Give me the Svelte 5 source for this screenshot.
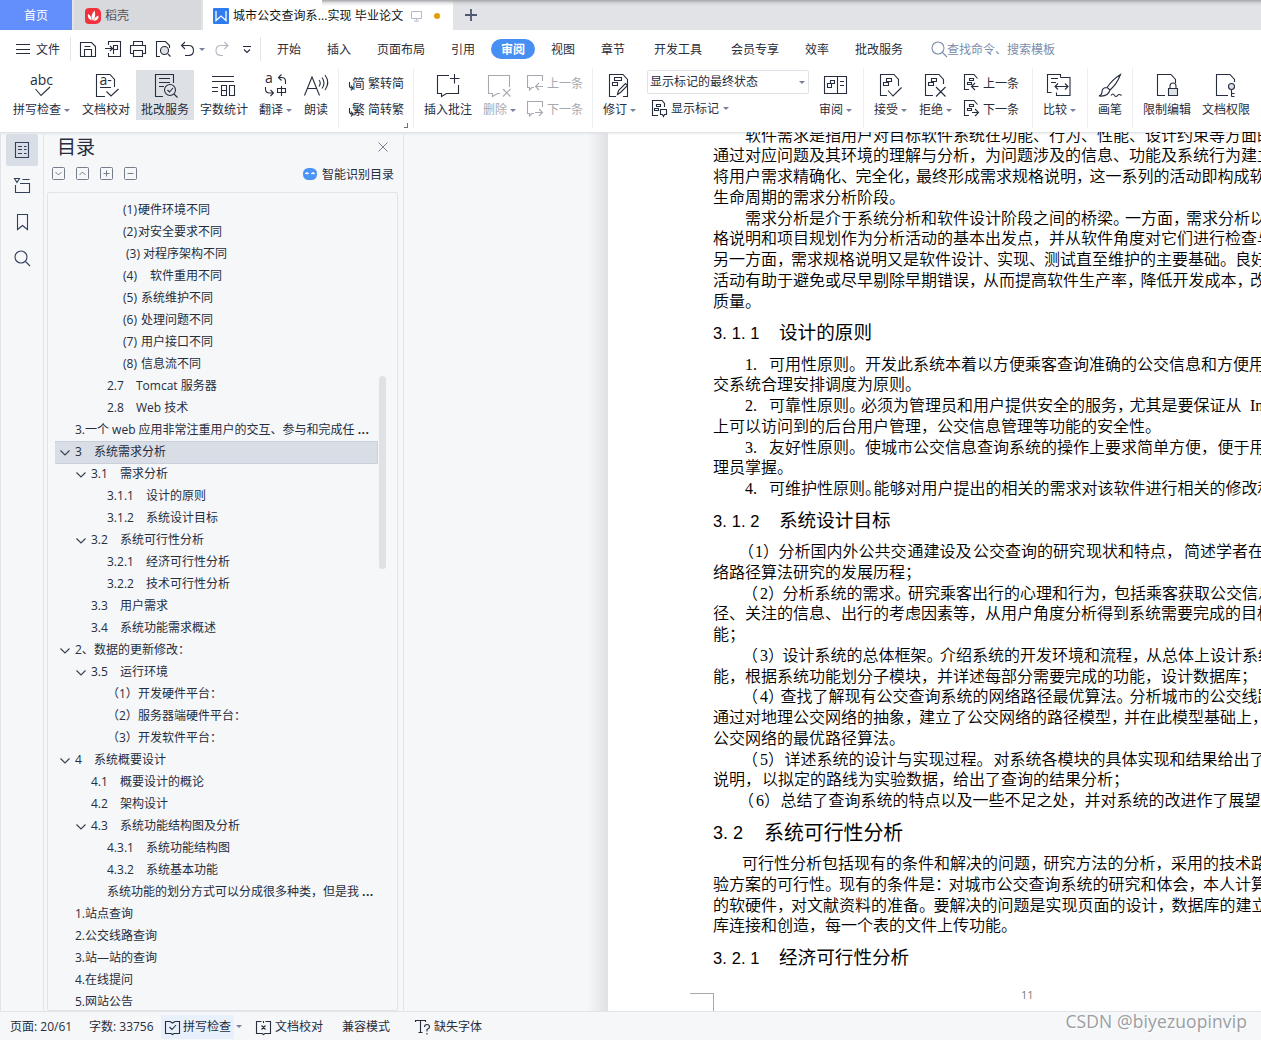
<script>
  const icons = {
    spell: { d: 'M6.5 15l5.5 6.5 9-8.5', t: [1, 11, 14, 'abc'] },
    proof: { d: 'M10 22.5H1.5V.5H15l4.5 5V13M11.5 17.5l4.5 4.5 7.5-7M5 13.5h11', t: [4.5, 11, 14, 'a-'] },
    review: { d: 'M9 22.5H1.5V.5h18V9M5 4.5h11M5 8.5h11M5 12.5h5M20 20l3.5 3.5M13.5 16l2 2 3.5-4', c: [16, 16, 5.5] },
    count: { d: 'M1 2.5h22M1 7.5h22M1 13.5h6M1 17.5h6M10.5 11.5h5v10h-5zM10.5 16.5h5M18.5 11.5h5v10h-5z' },
    translate: { d: 'M22.5 10V7q0-3.5-4-3.5h-3M18.5 .5l-3 3 3 3M2.5 13v2q0 4 4 4h4M7.5 16l3 3-3 3M14.5 14.5h8v4h-8zM18.5 12v10', t: [2, 9, 14, 'a'] },
    read: { d: 'M.5 21.5L8 3l7.5 18.5M3.5 14.5h9.5M15 6q2.5 3 0 6.5M18 3.500q4 5.500 0 11M21 1q5.500 7.500 0 15' },
    insert: { d: 'M13 1.500H1.500v18h4v3l5-3h12V11M18.500 0v9.500M14 4.500h9.500' },
    remove: { d: 'M13 19.500h-2.500l-5 3v-3h-4v-18h21V13M16 15l7.500 7.500M23.500 15L16 22.500' },
    revise: { d: 'M8 22.500H1.500V.5H15l4.500 5V22.500H15M9.500 20.500l1-4 7-7 2 2-7 7zM6.500 3.500h7v3h-7zM4.500 8.500h5v3h-5z' },
    pane: { d: 'M1.500 2.500h22v17h-22zM14.500 2.500v17M7.500 6.500h4v3h-4zM4.500 9.500h4v4h-4zM17 7.500h4M17 11.500h4' },
    accept: { d: 'M8 21.500H1.500V.5H15l4.500 5V12M9 16.500l5 5.500 8.500-8.500M7.500 4.500h5v3h-5zM4.500 8.500h5v3h-5z' },
    reject: { d: 'M9 21.500H1.500V.5H15l4.500 5V10M12 13l9.500 9.500M21.500 13L12 22.500M7.500 4.500h5v3h-5zM4.500 8.500h5v3h-5z' },
    compare: { d: 'M14.500 3.500V.5h-13v18h4M14.500 3.500h9.500v18H10.500v-3M5 4.500h7M5 8.500h5M9.500 12.500h12M12 9.500l-3 3 3 3M19 9.500l3 3-3 3' },
    brush: { d: 'M22.500.5q-8 5-13.500 13l3 2.500Q19 10 22.500.5zM9 13.500q-5 0-5 4.500 0 3-3 4 9 1 11-6M13 21.500q2-3 3.500 0 1.500 2 3 0t4 0' },
    lock: { d: 'M9 21.500H1.500V.5H15l4.500 5V9M14 14v-2q0-3 3-3t3 3v2', f: 'M12.500 14.500h9v7h-9z' },
    key: { d: 'M13 21.500H1.500V.5H15l4.500 5V8M16.500 16v6.500M16.500 19.500h3M16.500 22.500h3', c: [16.500, 12.500, 3] },
    toSimple: { d: 'M1.500 8v4q0 2 3 2M3 11.500l2 2.500-2 2.500', t: [4, 14, 13, '简'] },
    toTrad: { d: 'M1.500 8v4q0 2 3 2M3 11.500l2 2.500-2 2.500', t: [4, 14, 13, '繁'] },
    prevC: { d: 'M7 13.500H5L2.500 16v-2.500h-2v-12h15V7M16 12.500H9M12 9l-3.500 3.500L12 16' },
    nextC: { d: 'M7 13.500H5L2.500 16v-2.500h-2v-12h15V7M8 12.500h7.500M12 9l3.500 3.500L12 16' },
    prev: { d: 'M5 15.500H.5V.5H10l3.500 4M14.500 12.500H8M11 9l-3.500 3.500L11 16M5.500 4.500h4v2h-4zM3.500 8.500h4v2h-4z' },
    next: { d: 'M5 15.500H.5V.5H10l3.500 4M8 12.500h6.500M11 9l3.500 3.500L11 16M5.500 4.500h4v2h-4zM3.500 8.500h4v2h-4z' },
    marks: { d: 'M7 15.500H1.500V.5H11l2.500 3V7M5.500 4.500h4v2h-4zM3.500 8.500h4v2h-4zM9.500 9.500h6v5h-2l-1 2-1-2h-2z' },
    save: { d: 'M.5 1.500h11l4 4v10H.5zM4.500 15V8.500h7V15M4.500 5.500h6' },
    pdf: { d: 'M3.500 4V.5h12v15h-12V12M0 7.500h7M5 5l2.500 2.500L5 10M8.500 13V4.500h4v4h-4' },
    print: { d: 'M3.500 5V.5h9V5M3.500 12.500h-3v-8h15v8h-3M3.500 9.500h9v6h-9z' },
    preview: { d: 'M5 15.500H1.500V.5h9l4 4V7M13 13l2.500 2.500', c: [9.500, 9.500, 4] },
    undo: { d: 'M5 1L1.500 4.500 5 8M1.500 4.500h7q5 0 5 5t-5 5H5' },
    redo: { d: 'M10.500 1L14 4.500 10.500 8M14 4.500H7q-5 0-5 5t5 5h2' },
    more: { d: 'M1 5.500h8M2 8.500l3 3 3-3' },
    menu: { d: 'M0 3.500h14M0 8.500h14M0 12.500h14' },
    outline: { d: 'M1.500.5h13v15h-13zM4 4.500h4M4 7.500h4M4 11.500h4M10 4.500h2.500M10 7.500h2.500M10 11.500h2.500' },
    folder: { d: 'M1.500 7v7.500h14v-9H6M8.500 1.500h7M.5.5h5l-2.500 4z' },
    bookmark: { d: 'M3.500.5h10v15l-5-4-5 4z' },
    search: { d: 'M11.500 11.500l4.500 4.500', c: [7, 7, 6], plain: true },
    close: { d: 'M.5.5l9 9M9.500.5l-9 9' },
    bookOk: { d: 'M6 14.500H.5v-12H5l2.500 1.500L10 2.500h4.500v12H9l-1.500 1-1.500-1M4.500 8l2.500 2.500 4-4.500' },
    bookX: { d: 'M6 14.500H.5v-12h5M9.500 2.500h5v12H9l-1.500 1-1.500-1M7.500 2v2M5.500 6.500l4 4M9.500 6.500l-4 4' },
    font: { d: 'M.5 3V1.500h10V3M5.500 1.500v12M3.500 13.500h4M9.500 8q0-2.500 2.500-2.500T14.500 8q0 1.500-2.500 2.500v2M12 14v1.500' }
  };

  const ribbon = [
    { x: 13, icon: 'spell', dx: 16, label: '拼写检查', arrow: true },
    { x: 82, icon: 'proof', dx: 13, label: '文档校对' },
    { x: 136, icon: 'review', dx: 18, label: '批改服务', active: true },
    { x: 200, icon: 'count', dx: 11, label: '字数统计' },
    { x: 259, icon: 'translate', dx: 4, label: '翻译', arrow: true },
    { x: 304, icon: 'read', dx: 0, label: '朗读' },
    { x: 338, sep: true },
    { x: 348, rows: [['toSimple', '繁转简'], ['toTrad', '简转繁']], g: 2 },
    { x: 413, sep: true, corner: true },
    { x: 424, icon: 'insert', dx: 12, label: '插入批注' },
    { x: 483, icon: 'remove', dx: 4, label: '删除', arrow: true, off: true },
    { x: 527, rows: [['prevC', '上一条'], ['nextC', '下一条']], g: 2, off: true },
    { x: 592, sep: true },
    { x: 603, icon: 'revise', dx: 5, label: '修订', arrow: true },
    { x: 647, select: true },
    { x: 819, icon: 'pane', dx: 4, label: '审阅', arrow: true },
    { x: 863, sep: true },
    { x: 874, icon: 'accept', dx: 5, label: '接受', arrow: true },
    { x: 919, icon: 'reject', dx: 5, label: '拒绝', arrow: true },
    { x: 964, rows: [['prev', '上一条'], ['next', '下一条']], g: 1 },
    { x: 1032, sep: true },
    { x: 1043, icon: 'compare', dx: 3, label: '比较', arrow: true },
    { x: 1087, sep: true },
    { x: 1098, icon: 'brush', dx: 0, label: '画笔' },
    { x: 1132, sep: true },
    { x: 1143, icon: 'lock', dx: 13, label: '限制编辑' },
    { x: 1202, icon: 'key', dx: 13, label: '文档权限' }
  ];
  const widthOf = (list, i, end) => (i + 1 < list.length ? list[i + 1].x : end) - list[i].x;

  const menu = [
    { x: 277, t: '开始' }, { x: 327, t: '插入' }, { x: 377, t: '页面布局' }, { x: 451, t: '引用' },
    { x: 491, t: '审阅', on: true }, { x: 551, t: '视图' }, { x: 601, t: '章节' }, { x: 654, t: '开发工具' },
    { x: 731, t: '会员专享' }, { x: 805, t: '效率' }, { x: 855, t: '批改服务' }
  ];

  // [text x, number, number width, title, expanded, selected]
  const tree = [
    [123, '(1)', 15, '硬件环境不同'], [123, '(2)', 15, '对安全要求不同'], [126, '(3)', 17, '对程序架构不同'],
    [123, '(4)', 27, '软件重用不同'], [123, '(5)', 18, '系统维护不同'], [123, '(6)', 18, '处理问题不同'],
    [123, '(7)', 18, '用户接口不同'], [123, '(8)', 18, '信息流不同'],
    [107, '2.7', 29, 'Tomcat 服务器'], [107, '2.8', 29, 'Web 技术'],
    [75, '3.', 10, '一个 web 应用非常注重用户的交互、参与和完成任', false, false, true],
    [75, '3', 19, '系统需求分析', true, true], [91, '3.1', 29, '需求分析', true],
    [107, '3.1.1', 39, '设计的原则'], [107, '3.1.2', 39, '系统设计目标'],
    [91, '3.2', 29, '系统可行性分析', true], [107, '3.2.1', 39, '经济可行性分析'], [107, '3.2.2', 39, '技术可行性分析'],
    [91, '3.3', 29, '用户需求'], [91, '3.4', 29, '系统功能需求概述'],
    [75, '2、', 19, '数据的更新修改：', true], [91, '3.5', 29, '运行环境', true],
    [107, '（1）', 31, '开发硬件平台：'], [107, '（2）', 31, '服务器端硬件平台：'], [107, '（3）', 31, '开发软件平台：'],
    [75, '4', 19, '系统概要设计', true], [91, '4.1', 29, '概要设计的概论'], [91, '4.2', 29, '架构设计'],
    [91, '4.3', 29, '系统功能结构图及分析', true], [107, '4.3.1', 39, '系统功能结构图'], [107, '4.3.2', 39, '系统基本功能'],
    [107, '', 0, '系统功能的划分方式可以分成很多种类，但是我', false, false, true],
    [75, '1.', 10, '站点查询'], [75, '2.', 10, '公交线路查询'], [75, '3.', 10, '站—站的查询'],
    [75, '4.', 10, '在线提问'], [75, '5.', 10, '网站公告']
  ];

  // Body lines are lists of [start x, text]; headings carry a number and a title.
  const lines = [
    [[745, '软件需求是指用户对目标软件系统在功能、行为、性能、设计约束等方面的']],
    [[713, '通过对应问题及其环境的理解与分析，为问题涉及的信息、功能及系统行为建立']],
    [[713, '将用户需求精确化、'], [855.5, '完全化，'], [916, '最终形成需求规格说明，'], [1089.5, '这一系列的活动即构成软件']],
    [[713, '生命周期的需求分析阶段。']],
    [[745, '需求分析是介于系统分析和软件设计阶段之间的桥梁。'], [1125, '一方面，'], [1186, '需求分析以规']],
    [[713, '格说明和项目规划作为分析活动的基本出发点，并从软件角度对它们进行检查与']],
    [[713, '另一方面，'], [791, '需求规格说明又是软件设计、'], [997, '实现、'], [1044, '测试直至维护的主要基础。'], [1235, '良好的']],
    [[713, '活动有助于避免或尽早剔除早期错误，'], [983, '从而提高软件生产率，'], [1140.5, '降低开发成本，'], [1250, '改善']],
    [[713, '质量。']],
    { n: '3.1.1', w: 66, t: '设计的原则' },
    [[745, '1.'], [769, '可用性原则。'], [865, '开发此系统本着以方便乘客查询准确的公交信息和方便用户']],
    [[713, '交系统合理安排调度为原则。']],
    [[745, '2.'], [769, '可靠性原则。'], [861, '必须为管理员和用户提供安全的服务，'], [1129.5, '尤其是要保证从'], [1250, 'Internet']],
    [[713, '上可以访问到的后台用户管理，公交信息管理等功能的安全性。']],
    [[745, '3.'], [769, '友好性原则。'], [865, '使城市公交信息查询系统的操作上要求简单方便，'], [1217.5, '便于用户']],
    [[713, '理员掌握。']],
    [[745, '4.'], [769, '可维护性原则。'], [873.5, '能够对用户提出的相关的需求对该软件进行相关的修改和']],
    { n: '3.1.2', w: 66, t: '系统设计目标' },
    [[738, '（'], [755, '1'], [763, '）'], [778.5, '分析国内外公共交'], [907.5, '通建设及'], [973, '公交查询的研究'], [1086, '现状和特点，'], [1184, '简述学者在网']],
    [[713, '络路径算法研究的发展历程；']],
    [[742, '（'], [760, '2'], [768, '）'], [782.5, '分析系统的需求。'], [908, '研究乘客出行的心理和行为，'], [1114, '包括乘客获取公交信息的途']],
    [[713, '径、关注的信息、出行的考虑因素等，从用户角度分析得到系统需要完成的目标']],
    [[713, '能；']],
    [[742, '（'], [760, '3'], [768, '）'], [782.5, '设计系统的总体框架。'], [940, '介绍系统的开发环境和流程，'], [1146, '从总体上设计系统功']],
    [[713, '能，根据系统功能划分子模块，并详述每部分需要完成的功能，设计数据库；']],
    [[742, '（'], [760, '4'], [768, '）'], [780.5, '查找了解现有公交查询系统的网络路径最优算法。'], [1129.5, '分析城市的公交线路网']],
    [[713, '通过对地理公交网络的抽象，'], [919, '建立了公交网络的路径模型，'], [1124, '并在此模型基础上，']],
    [[713, '公交网络的最优路径算法。']],
    [[742, '（'], [760, '5'], [768, '）'], [784.5, '详述系统的设计与实现过程。'], [993.5, '对系统各模块的具体实现和结果给出了详']],
    [[713, '说明，'], [762, '以拟定的路线为实验数据，'], [953, '给出了查询的结果分析；']],
    [[738, '（'], [756, '6'], [764, '）'], [780.5, '总结了查询系统的特点以及一些不足之处，'], [1084.5, '并对系统的改进作了展望。']],
    { n: '3.2', w: 51, t: '系统可行性分析', big: true },
    [[742, '可行性分析包括现有的条件和解决的问题，'], [1043.5, '研究方法的分析，'], [1171, '采用的技术路线']],
    [[713, '验方案的可行性。'], [839, '现有的条件是：'], [948.5, '对城市公交查询系统的研究和体会，'], [1203, '本人计算机']],
    [[713, '的软硬件，'], [791, '对文献资料的准备。'], [933.5, '要解决的问题是实现页面的设计，'], [1171.5, '数据库的建立']],
    [[713, '库连接和创造，每一个表的文件上传功能。']],
    { n: '3.2.1', w: 66, t: '经济可行性分析' }
  ];
  const segWidth = (l, i) => (i + 1 < l.length ? l[i + 1][0] - l[i][0] : 600);
</script>

{#snippet ico(name, size)}
  {@const i = icons[name]}
  <svg class="ico" width={size} height={size} viewBox="0 0 {size} {size}">
    {#if i.f}<path class="shade" d={i.f} />{/if}
    {#if i.c}<circle class:shade={!i.plain} cx={i.c[0]} cy={i.c[1]} r={i.c[2]} />{/if}
    <path d={i.d} />
    {#if i.t}<text x={i.t[0]} y={i.t[1]} font-size={i.t[2]}>{i.t[3]}</text>{/if}
  </svg>
{/snippet}

<div class="app">
  <header class="tabs">
    <div class="home">首页</div>
    <div class="docer">
      <svg width="16" height="16" viewBox="0 0 16 16"><path d="M4 0h7a5 5 0 0 1 5 5v6a5 5 0 0 1-5 5H4a4 4 0 0 1-4-4V4a4 4 0 0 1 4-4z" fill="#f0323c" /><path d="M8 13Q4.500 8 9.500 2.500 11.500 8 8 13zM6.500 12.500Q2 10.500 3 6 7 8 6.500 12.500zM9 13q0-4 4.500-5.500Q14 12 9 13z" fill="#fff" /></svg>
      <span>稻壳</span>
    </div>
    <div class="current">
      <svg width="16" height="16" viewBox="0 0 16 16"><rect width="16" height="16" rx="1" fill="#2f7cf0" /><path d="M3 3v9.500l5-4.500 5 4.500V3" fill="none" stroke="#fff" stroke-width="1.300" /></svg>
      <span class="name">城市公交查询系...实现 毕业论文</span>
      <svg class="screen" width="12" height="12" viewBox="0 0 12 12"><path d="M.5 1.500h10v7H.5zM5.500 8.500v2M3 11h5" /></svg>
      <i class="dot"></i>
    </div>
    <svg class="plus" width="12" height="12" viewBox="0 0 12 12"><path d="M6 0v12M0 6h12" /></svg>
    <div class="cast"></div>
  </header>

  <nav class="menu">
    <div class="file">{@render ico('menu', 16)}<span>文件</span></div>
    <div class="quick">
      {@render ico('save', 16)}{@render ico('pdf', 16)}{@render ico('print', 16)}{@render ico('preview', 16)}
      <span class="un">{@render ico('undo', 16)}<i class="arrow"></i></span>
      <span class="re">{@render ico('redo', 16)}</span>
      {@render ico('more', 16)}
    </div>
    {#each menu as m, i}
      <div class="mi" style:width="{widthOf(menu, i, 931)}px"><span class:on={m.on}>{m.t}</span></div>
    {/each}
    <div class="find">{@render ico('search', 16)}<span>查找命令、搜索模板</span></div>
  </nav>

  <section class="ribbon">
    {#each ribbon as r, i}
      <div class="slot" style:width="{widthOf(ribbon, i, 1261)}px">
        {#if r.sep}
          <i class="sep"></i>
          {#if r.corner}<i class="corner"></i>{/if}
        {:else if r.rows}
          <div class="rows" class:off={r.off}>
            {#each r.rows as row}
              <div class="row" style:gap="{r.g}px">{@render ico(row[0], 18)}<span>{row[1]}</span></div>
            {/each}
          </div>
        {:else if r.select}
          <div class="view">
            <div class="select"><span>显示标记的最终状态</span><i class="arrow"></i></div>
            <div class="row marks">{@render ico('marks', 18)}<span>显示标记</span><i class="arrow"></i></div>
          </div>
        {:else}
          <div class="btn" class:active={r.active} class:off={r.off}>
            <div class="pic" style:padding-left="{r.dx}px">{@render ico(r.icon, 24)}</div>
            <div class="lab"><span>{r.label}</span>{#if r.arrow}<i class="arrow"></i>{/if}</div>
          </div>
        {/if}
      </div>
    {/each}
  </section>

  <main class="work">
    <aside class="rail">
      <div class="tool sel">{@render ico('outline', 17)}</div>
      <div class="tool">{@render ico('folder', 17)}</div>
      <div class="tool">{@render ico('bookmark', 17)}</div>
      <div class="tool">{@render ico('search', 17)}</div>
    </aside>
    <aside class="panel">
      <div class="head"><h2>目录</h2>{@render ico('close', 11)}</div>
      <div class="acts">
        {#each ['M3.500 5l3 3 3-3', 'M3.500 8l3-3 3 3', 'M3.500 6.500h6M6.500 3.500v6', 'M3.500 6.500h6'] as d}
          <svg class="box" width="13" height="13" viewBox="0 0 13 13"><rect x=".5" y=".5" width="12" height="12" rx="1" /><path {d} /></svg>
        {/each}
        <svg class="bot" width="14" height="12" viewBox="0 0 14 12"><rect width="14" height="12" rx="5.500" fill="#4a94f5" /><path d="M2.500 6q1.500-2 3 0M8.500 6q1.500-2 3 0" fill="none" stroke="#fff" stroke-width="1.300" /></svg>
        <span class="smart">智能识别目录</span>
      </div>
      <div class="tree">
        <div class="list">
          {#each tree as [x, n, w, t, open, sel, more]}
            <div class="node" class:sel>
              <span class="lead" style:width="{x - 55}px">{#if open}<svg width="10" height="6" viewBox="0 0 10 6"><path d="M.5.5L5 5 9.500.5" /></svg>{/if}</span>
              <span class="num" style:width="{w}px">{n}</span><span>{t}</span>{#if more}<b>...</b>{/if}
            </div>
          {/each}
        </div>
        <i class="thumb"></i>
      </div>
    </aside>
    <div class="desk"></div>
    <article class="page">
      {#each lines as l}
        {#if l.n}
          <h3 class:big={l.big}><span class="hn" style:width="{l.w}px">{#each l.n.split('') as c}<i>{c}</i>{/each}</span>{l.t}</h3>
        {:else}
          <p style:padding-left="{l[0][0] - 713}px">
            {#each l as s, i}<span class="seg" style:width="{segWidth(l, i)}px">{s[1]}</span>{/each}
          </p>
        {/if}
      {/each}
      <footer><i class="crop"></i><span>11</span></footer>
    </article>
  </main>

  <footer class="status">
    <span class="s1">页面: 20/61</span>
    <span class="s2">字数: 33756</span>
    <span class="s3">{@render ico('bookOk', 16)}拼写检查</span><i class="arrow"></i>
    <span class="s4">{@render ico('bookX', 16)}文档校对</span>
    <span class="s5">兼容模式</span>
    <span class="s6">{@render ico('font', 16)}缺失字体</span>
    <span class="mark">CSDN @biyezuopinvip</span>
  </footer>
</div>

<style>
  :global(body) { overflow: hidden; }
  .app { width: 1261px; height: 1040px; overflow: hidden; display: flex; flex-direction: column; background: #fff; color: #262d3d; font: 12px/18px 'Open Sans', 'Noto Sans CJK SC', sans-serif; white-space: nowrap; }
  .app * { box-sizing: border-box; }
  svg { display: block; flex: none; }
  .ico { fill: none; stroke: currentColor; stroke-width: 1.1; overflow: visible; }
  .ico text { fill: currentColor; stroke: none; }
  .ico .shade { fill: #dfe1e6; }
  .arrow { flex: none; width: 0; height: 0; border: 3px solid transparent; border-top: 3px solid #77829a; border-bottom: 0; }

  .tabs { position: relative; height: 30px; flex: none; display: flex; align-items: center; background: #e2e3e7; }
  .home { width: 72px; height: 30px; line-height: 31px; text-align: center; background: #628ffb; color: #fff; }
  .docer { width: 127px; height: 30px; margin: 0 2px; padding: 1px 0 0 11px; display: flex; align-items: center; gap: 4px; background: #d8d9dc; color: #50545c; }
  .current { width: 250px; height: 30px; padding: 1px 0 0 10px; display: flex; align-items: center; background: #fff; color: #111; }
  .name { width: 171px; margin-left: 4px; letter-spacing: .1px; }
  .current .screen { margin-left: 7px; fill: none; stroke: #b4bac8; }
  .dot { width: 6px; height: 6px; margin-left: 11px; border-radius: 3px; background: #e79a0b; }
  .plus { margin-left: 12px; stroke: #4d5871; stroke-width: 1.8; }
  .cast { position: absolute; top: 0; left: 322px; right: 0; height: 6px; background: linear-gradient(#a5a6a9, rgba(190, 191, 194, .4) 50%, transparent); }

  .menu { height: 36px; flex: none; display: flex; align-items: center; padding: 2px 0 0 16px; }
  .menu span { position: relative; top: 1px; }
  .menu .un, .menu .re, .menu .on { top: 0; }
  .file { width: 55px; height: 24px; display: flex; align-items: center; gap: 4px; border-right: 1px solid #e2e4ea; }
  .quick { width: 190px; height: 24px; margin-right: 16px; padding-left: 9px; display: flex; align-items: center; gap: 9px; border-right: 1px solid #e2e4ea; }
  .un { display: flex; align-items: center; gap: 3px; }
  .re { color: #b3b7bf; margin-right: 3px; }
  .mi { flex: none; }
  .on { display: block; width: 44px; height: 20px; line-height: 21px; border-radius: 10px; background: #478ff2; color: #fff; font-weight: 700; text-align: center; }
  .find { display: flex; align-items: center; color: #7b8cab; }

  .ribbon { height: 66px; flex: none; display: flex; padding: 4px 0 0 13px; }
  .slot { flex: none; display: flex; position: relative; }
  .sep { width: 1px; height: 60px; margin-top: -2px; background: #eceef1; }
  .corner { position: absolute; left: -9px; top: 53px; width: 4px; height: 5px; border: solid #697388; border-width: 0 1px 1px 0; }
  .btn { width: 58px; height: 50px; padding-top: 4px; }
  .lab { height: 22px; padding-top: 2px; display: flex; align-items: center; gap: 3px; }
  .active { background: #dde1e6; }
  .active .lab { padding-left: 5px; }
  .off { color: #a6a9b0; }
  .row { height: 26px; display: flex; align-items: center; }
  .row span { padding-top: 1px; }
  .select { width: 162px; height: 24px; padding: 0 3px 0 2px; display: flex; align-items: center; justify-content: space-between; border: 1px solid #dfe2e8; border-radius: 2px; }
  .marks { height: 29px; padding-left: 4px; gap: 2px; }
  .marks .arrow { margin-left: 2px; }

  .work { height: 879px; flex: none; display: flex; background: #f5f7f9; box-shadow: inset 0 3px 3px -2px #d5d7da; }
  .rail { width: 44px; border: solid #e2e4e9; border-width: 0 1px; padding: 2px 0 0 5px; }
  .tool { width: 32px; height: 32px; margin-bottom: 4px; display: grid; place-items: center; border-radius: 2px; color: #33405c; }
  .rail .sel { background: #d9dde5; }
  .panel { width: 360px; border-right: 1px solid #e2e4e9; padding-left: 3px; }
  .head { height: 30px; display: flex; justify-content: space-between; padding: 0 14px 0 10px; align-items: center; color: #6a7282; }
  .head .ico { stroke-width: .9; }
  h2 { margin: 0; font-size: 19px; font-weight: 400; line-height: 28px; color: #262d3d; }
  .acts { height: 30px; display: flex; align-items: center; padding: 0 0 7px 5px; gap: 11px; }
  .box { fill: none; stroke: #767d8a; }
  .bot { margin-left: 155px; margin-right: -7px; }
  .smart { padding: 2px 0 0 1px; }
  .tree { width: 351px; height: 819px; padding: 6px 0 0 7px; display: flex; border: 1px solid #e1e4e9; border-radius: 2px; }
  .list { width: 323px; height: 807px; overflow: hidden; }
  .node { height: 22px; display: flex; align-items: center; }
  .node.sel { background: #d9dde5; box-shadow: inset -1px 0 #c9cfdb, inset 0 1px #c9cfdb, 0 1px #c9cfdb; }
  .node b { margin-left: 3px; letter-spacing: .5px; }
  .lead, .num { flex: none; }
  .lead { display: flex; justify-content: flex-end; padding: 2px 5px 0 0; }
  .lead svg { fill: none; stroke: #3a4254; stroke-width: 1.2; }
  .thumb { width: 7px; height: 193px; margin: 177px 0 0 1px; border-radius: 4px; background: #dfe1e5; }

  .desk { width: 204px; background: linear-gradient(90deg, transparent 90%, #dfe0e3); }
  .page { width: 653px; height: 879px; overflow: hidden; padding-left: 105px; background: #fff; color: #000; box-shadow: inset 0 3px 3px -2px #d5d7da; font: 16px/20.75px 'Liberation Serif', 'Noto Sans CJK SC', sans-serif; }
  p { display: flex; height: 20.75px; margin: 0; font-weight: 350; }
  p:first-child { margin-top: -6.4px; }
  .seg { flex: none; }
  h3 { display: flex; height: 42.25px; margin: 0; font: 400 18.6px/42px 'Liberation Sans', 'Noto Sans CJK SC', sans-serif; }
  h3.big { font-size: 19.9px; }
  .hn { flex: none; display: flex; font: 400 16.5px/43px 'Liberation Sans', sans-serif; }
  .hn i { width: 9.33px; font-style: normal; }
  .big .hn { font-size: 18px; }
  .big .hn i { width: 10px; }
  .page footer { display: flex; margin-left: -23px; padding-top: 14px; color: #7a7a7a; font: 11px/14px 'Open Sans', sans-serif; }
  .page footer span { margin-top: -5px; }
  .crop { width: 24px; height: 40px; margin: 0 307px 0 0; border: solid #a9a9a9; border-width: 1px 1px 0 0; }

  .status { height: 29px; flex: none; display: flex; align-items: center; border-top: 1px solid #e1e3e8; background: #f5f7f9; padding: 1px 0 0 10px; }
  .status span { display: flex; align-items: center; flex: none; height: 24px; }
  .s1 { width: 79px; }
  .s2 { width: 72px; }
  .s3 { width: 73px; padding-left: 4px; gap: 2px; background: #e7f0fb; }
  .status .arrow { margin: 0 14px 0 2px; }
  .s4 { width: 86px; gap: 3px; }
  .s5 { width: 73px; }
  .s6 { gap: 3px; }
  .status .mark { margin-left: auto; margin-right: 14px; height: 34px; padding-bottom: 12px; font: 17.5px/20px 'Open Sans', sans-serif; letter-spacing: .1px; color: #9b9ea3; text-shadow: 1px 1px 0 #fff; }
</style>
